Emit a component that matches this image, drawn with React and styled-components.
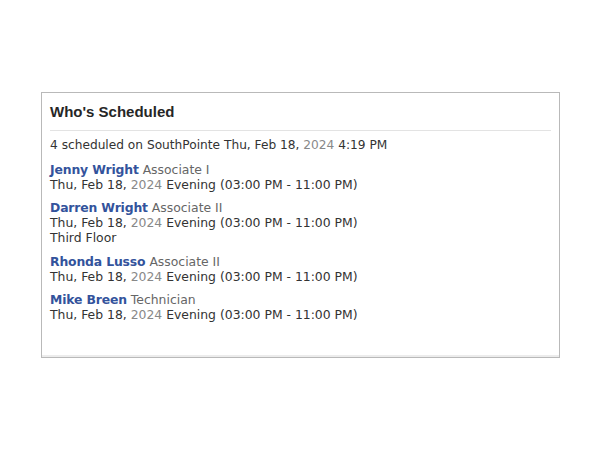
import React from 'react'
import styled, { createGlobalStyle } from 'styled-components'

const GlobalStyle = createGlobalStyle`
  body {
    margin: 0;
    background: #fff;
    font-family: "DejaVu Sans", Verdana, sans-serif;
  }
`

const people = [
  { name: 'Jenny Wright', role: 'Associate I', date: 'Thu, Feb 18,', shift: 'Evening (03:00 PM - 11:00 PM)' },
  { name: 'Darren Wright', role: 'Associate II', date: 'Thu, Feb 18,', shift: 'Evening (03:00 PM - 11:00 PM)', note: 'Third Floor' },
  { name: 'Rhonda Lusso', role: 'Associate II', date: 'Thu, Feb 18,', shift: 'Evening (03:00 PM - 11:00 PM)' },
  { name: 'Mike Breen', role: 'Technician', date: 'Thu, Feb 18,', shift: 'Evening (03:00 PM - 11:00 PM)' },
]

export default function App() {
  return (
    <Page>
      <GlobalStyle />
      <Panel>
        <Title>Who's Scheduled</Title>
        <Summary>
          4 scheduled on SouthPointe Thu, Feb 18, <Year>2024</Year> 4:19 PM
        </Summary>
        <List>
          {people.map((p) => (
            <Entry key={p.name} $tall={!!p.note}>
              <div>
                <Name>{p.name}</Name> <Role>{p.role}</Role>
              </div>
              <Line>
                {p.date} <Year>2024</Year> {p.shift}
              </Line>
              {p.note && <Line>{p.note}</Line>}
            </Entry>
          ))}
        </List>
      </Panel>
    </Page>
  )
}

const Page = styled.div`
  width: 600px;
  height: 450px;
  padding: 92px 0 0 41px;
  box-sizing: border-box;
`

const Panel = styled.div`
  width: 519px;
  height: 266px;
  box-sizing: border-box;
  border: 1px solid #b9b9b9;
  box-shadow: inset 0 -2px 0 #ececec;
  padding: 10px 8px 0 8px;
  color: #333;
`

const Title = styled.div`
  font-family: "Liberation Sans", Arial, sans-serif;
  font-size: 15px;
  font-weight: bold;
  color: #262626;
  padding-bottom: 9px;
  border-bottom: 1px solid #e3e3e3;
  line-height: 18px;
`

const Summary = styled.div`
  font-size: 12.2px;
  line-height: 15px;
  margin-top: 7px;
`

const List = styled.div`
  display: flex;
  flex-direction: column;
  gap: 8px;
  margin-top: 9px;
`

const Entry = styled.div`
  font-size: 12.4px;
  line-height: 15px;
  margin-bottom: ${(p) => (p.$tall ? '1px' : '0')};
`

const Name = styled.span`
  color: #33539c;
  font-weight: bold;
  letter-spacing: -0.15px;
`

const Role = styled.span`
  color: #666;
`

const Line = styled.div`
  color: #333;
`

const Year = styled.span`
  color: #888;
`
